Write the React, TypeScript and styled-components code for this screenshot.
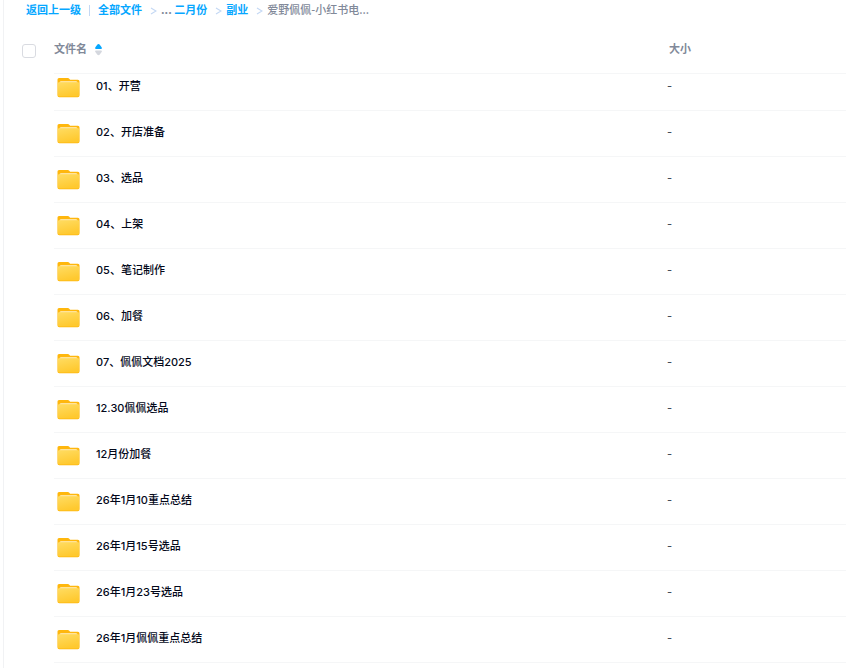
import React from "react";
import styled, { createGlobalStyle } from "styled-components";

const GlobalStyle = createGlobalStyle`
  *, *::before, *::after { box-sizing: border-box; }
  body {
    margin: 0;
    background: #fff;
    color: #03081a;
    font-family: Inter, "Noto Sans CJK SC", sans-serif;
    font-size: 11px;
    font-weight: 500;
    line-height: 16px;
  }
`;

const Page = styled.main`
  min-height: 100vh;
  margin-left: 3px;
  border-left: 1px solid #f1f2f4;
`;

const Breadcrumb = styled.nav`
  display: flex;
  align-items: center;
  height: 28px;
  padding: 0 16px 10px 22px;
  color: #818999;
  font-family: "Noto Sans CJK SC", sans-serif;
  font-weight: 700;
  white-space: nowrap;
`;

const Crumb = styled.a`
  color: #06a7ff;
  text-decoration: none;
`;

const CurrentFolder = styled.span`
  font-weight: 500;
`;

const Divider = styled.span`
  width: 1px;
  height: 11px;
  margin: 2px 8px 0;
  background: #c4d8f4;
`;

const ChevronIcon = styled.svg`
  flex: none;
  width: 7px;
  height: 8px;
  margin: 4px 4px 0 8px;
  fill: none;
  stroke: #c4d8f4;
`;

const Table = styled.table`
  width: 100%;
  table-layout: fixed;
  border-collapse: separate;
  border-spacing: 0;
`;

const CheckColumn = styled.col`
  width: 50px;
`;

const SizeColumn = styled.col`
  width: 182px;
`;

const HeadCell = styled.th<{ $lined?: boolean }>`
  height: 46px;
  padding: 0 0 4px;
  border-bottom: 1px solid ${(p) => (p.$lined ? "#f5f6f7" : "transparent")};
  color: #818999;
  font-weight: 700;
  text-align: left;
`;

const CheckHeadCell = styled(HeadCell)`
  padding-bottom: 0;
`;

const SizeLabel = styled.span`
  padding-left: 5px;
`;

const CheckBox = styled.input`
  display: block;
  appearance: none;
  width: 14px;
  height: 14px;
  margin: 0 0 0 18px;
  border: 1px solid #d9dbe1;
  border-radius: 3px;
  background: #fff;

  &:checked {
    border-color: #06a7ff;
    background: #06a7ff;
  }
`;

const SortButton = styled.button`
  display: flex;
  align-items: center;
  gap: 8px;
  padding: 0;
  border: 0;
  background: none;
  color: inherit;
  font: inherit;
  cursor: pointer;
`;

const SortIcon = styled.svg`
  width: 7px;
  height: 12px;
  margin-top: 2px;
`;

const Row = styled.tr<{ $tucked?: boolean }>`
  height: ${(p) => (p.$tucked ? 37 : 46)}px;
`;

const Cell = styled.td<{ $lined?: boolean }>`
  padding: 0;
  border-bottom: 1px solid ${(p) => (p.$lined ? "#f5f6f7" : "transparent")};
  vertical-align: bottom;
`;

const FileName = styled.div`
  display: flex;
  align-items: center;
  gap: 16px;
  padding: 0 0 13px 3px;
`;

const FileLink = styled.a`
  padding-bottom: 3px;
  color: inherit;
  text-decoration: none;
`;

const SizeValue = styled.div`
  padding: 0 0 16px 3px;
  color: #454d5a;
`;

const FolderSvg = styled.svg`
  flex: none;
  width: 23px;
  height: 20px;
  overflow: visible;
`;

const files = [
  "01、开营",
  "02、开店准备",
  "03、选品",
  "04、上架",
  "05、笔记制作",
  "06、加餐",
  "07、佩佩文档2025",
  "12.30佩佩选品",
  "12月份加餐",
  "26年1月10重点总结",
  "26年1月15号选品",
  "26年1月23号选品",
  "26年1月佩佩重点总结",
];

function Chevron() {
  return (
    <ChevronIcon viewBox="0 0 7 8" aria-hidden="true">
      <path d="M1 1 6 4 1 7" strokeWidth="1.2" />
    </ChevronIcon>
  );
}

function Folder() {
  return (
    <FolderSvg viewBox="-0.5 -0.6 23 20" aria-hidden="true">
      <defs>
        <linearGradient id="folder-front" x1="0" y1="0" x2="0.35" y2="1">
          <stop offset="0" stopColor="#ffdc62" />
          <stop offset="1" stopColor="#ffc92f" />
        </linearGradient>
      </defs>
      <path d="M0 2Q0 .5 1.5 .5H10.4Q11.2.5 11.8 1.2L12.6 2.2H20.4Q22 2.2 22 3.8V17.8Q22 19.6 20.2 19.6H1.8Q0 19.6 0 17.8Z" fill="#ffb70d" />
      <path d="M2 6V5Q2 3.5 3.5 3.5H18.5Q20 3.5 20 5V6Z" fill="#ffe39b" />
      <path d="M.3 6Q.3 4.7 1.6 4.7H20.4Q21.7 4.7 21.7 6V17.3Q21.7 19 19.8 19H2.2Q.3 19 .3 17.3Z" fill="url(#folder-front)" />
    </FolderSvg>
  );
}

export default function App() {
  return (
    <>
      <GlobalStyle />
      <Page>
        <Breadcrumb aria-label="路径">
          <Crumb href="#up">返回上一级</Crumb>
          <Divider />
          <Crumb href="#all">全部文件</Crumb>
          <Chevron />
          <span>...&nbsp;</span>
          <Crumb href="#february">二月份</Crumb>
          <Chevron />
          <Crumb href="#side">副业</Crumb>
          <Chevron />
          <CurrentFolder>爱野佩佩-小红书电...</CurrentFolder>
        </Breadcrumb>
        <Table>
          <colgroup>
            <CheckColumn />
            <col />
            <SizeColumn />
          </colgroup>
          <thead>
            <tr>
              <CheckHeadCell>
                <CheckBox type="checkbox" aria-label="全选" />
              </CheckHeadCell>
              <HeadCell $lined>
                <SortButton type="button">
                  文件名
                  <SortIcon viewBox="0 0 7 12" aria-hidden="true">
                    <path d="M3.5 0Q4.2 0 4.8.8L6.6 3.2Q7.4 5 6 5H1Q-.4 5 .4 3.2L2.2.8Q2.8 0 3.5 0Z" fill="#06a7ff" />
                    <path d="M1 6.5H6Q7.4 6.5 6.6 8.1L4.8 10.5Q3.5 12.1 2.2 10.5L.4 8.1Q-.4 6.5 1 6.5Z" fill="#d4d7de" />
                  </SortIcon>
                </SortButton>
              </HeadCell>
              <HeadCell $lined>
                <SizeLabel>大小</SizeLabel>
              </HeadCell>
            </tr>
          </thead>
          <tbody>
            {files.map((name, index) => (
              <Row key={name} $tucked={index === 0}>
                <Cell />
                <Cell $lined>
                  <FileName>
                    <Folder />
                    <FileLink href={`#file-${index + 1}`}>{name}</FileLink>
                  </FileName>
                </Cell>
                <Cell $lined>
                  <SizeValue>-</SizeValue>
                </Cell>
              </Row>
            ))}
          </tbody>
        </Table>
      </Page>
    </>
  );
}
